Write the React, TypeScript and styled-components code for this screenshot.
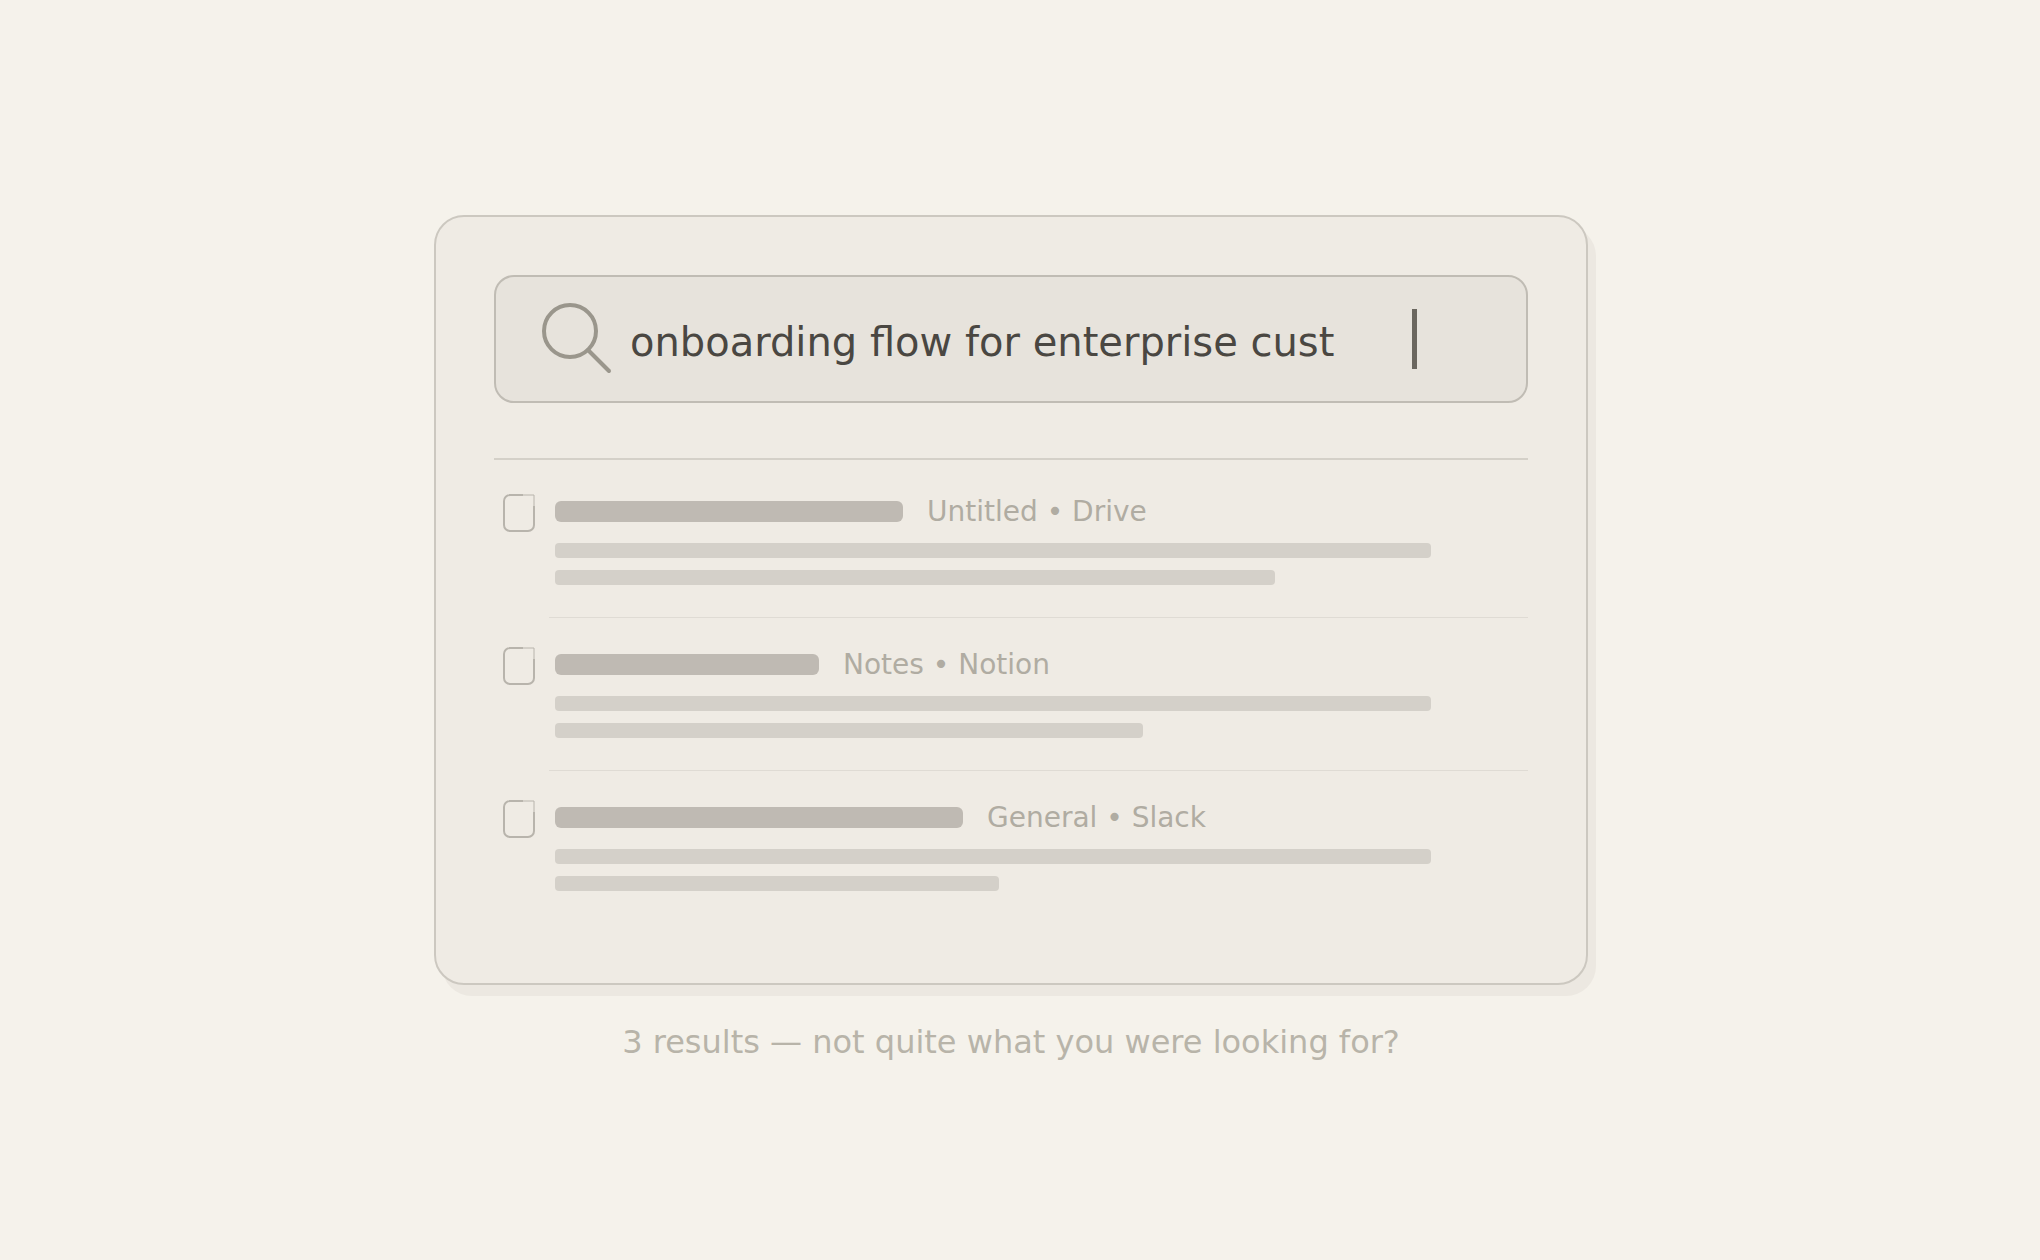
import styled, { createGlobalStyle } from "styled-components";

const GlobalStyle = createGlobalStyle`
  html, body {
    margin: 0;
    padding: 0;
    background: #f5f2eb;
  }
`;

const Page = styled.main`
  width: 2040px;
  height: 1260px;
  box-sizing: border-box;
  padding: 215px 0 0 434px;
  font-family: "DejaVu Sans", sans-serif;
`;

const Column = styled.div`
  width: 1154px;
  display: flex;
  flex-direction: column;
  align-items: center;
`;

const Card = styled.section`
  width: 100%;
  height: 770px;
  box-sizing: border-box;
  padding: 58px 58px 0;
  background: #efebe4;
  border: 2px solid #ccc8c0;
  border-radius: 30px;
  box-shadow: 8px 11px 0 #ece8e1;
`;

const SearchBar = styled.div`
  height: 128px;
  box-sizing: border-box;
  display: flex;
  align-items: center;
  padding-left: 46px;
  background: #e7e3dc;
  border: 2px solid #c0bcb4;
  border-radius: 20px;
`;

const SearchIcon = styled.svg`
  width: 72px;
  height: 72px;
  flex: none;
  margin-right: 16px;
  fill: none;
  stroke: #9a968c;
  stroke-width: 4;
  stroke-linecap: round;
`;

const Query = styled.span`
  width: 782px;
  flex: none;
  font-size: 40px;
  color: #4a4742;
  white-space: nowrap;
  position: relative;
  top: 3px;
`;

const Caret = styled.span`
  width: 5px;
  height: 60px;
  background: #6b675f;
`;

const Results = styled.div`
  margin-top: 55px;
  border-top: 2px solid #d4d0c8;
`;

const Row = styled.article`
  display: flex;
  gap: 20px;
  padding: 34px 0 0 9px;
  height: 153px;
  box-sizing: border-box;
`;

const DocIcon = styled.svg`
  width: 32px;
  height: 38px;
  flex: none;
  fill: none;
  stroke: #b8b4ac;
  stroke-width: 2;
`;

const Body = styled.div`
  flex: 1;
  min-width: 0;
  display: flex;
  flex-direction: column;
  position: relative;
`;

const TitleRow = styled.div`
  display: flex;
  align-items: center;
  gap: 24px;
  height: 21px;
  margin-top: 7px;
  margin-bottom: 21px;
`;

const TitleBar = styled.div<{ $width: number }>`
  width: ${(p) => p.$width}px;
  height: 21px;
  border-radius: 6px;
  background: #bfbab3;
`;

const Meta = styled.span`
  font-size: 28px;
  color: #b0aca2;
  white-space: nowrap;
`;

const Line = styled.div<{ $width: number }>`
  width: ${(p) => p.$width}px;
  height: 15px;
  border-radius: 4px;
  background: #d4d0c9;
  margin-bottom: 12px;
`;

const RowRule = styled.div`
  position: absolute;
  left: -6px;
  right: 0;
  top: 123px;
  height: 1px;
  background: #dfdbd4;
`;

const Footer = styled.p`
  margin: 38px 0 0;
  font-size: 32px;
  color: #b8b4a9;
`;

const rows = [
  { title: 348, meta: "Untitled • Drive", second: 720 },
  { title: 264, meta: "Notes • Notion", second: 588 },
  { title: 408, meta: "General • Slack", second: 444 },
];

export default function App() {
  return (
    <>
      <GlobalStyle />
      <Page>
        <Column>
          <Card>
            <SearchBar>
              <SearchIcon viewBox="0 0 72 72">
                <circle cx="28" cy="28" r="26" />
                <line x1="46" y1="47" x2="67" y2="68" />
              </SearchIcon>
              <Query>onboarding flow for enterprise cust</Query>
              <Caret />
            </SearchBar>
            <Results>
              {rows.map((row, i) => (
                <Row key={row.meta}>
                  <DocIcon viewBox="0 0 32 38">
                    <path d="M6 1H20M31 12V31a6 6 0 0 1-6 6H7a6 6 0 0 1-6-6V7a6 6 0 0 1 6-6" />
                    <path d="M20 1H31V12" strokeWidth="1" />
                  </DocIcon>
                  <Body>
                    <TitleRow>
                      <TitleBar $width={row.title} />
                      <Meta>{row.meta}</Meta>
                    </TitleRow>
                    <Line $width={876} />
                    <Line $width={row.second} />
                    {i < rows.length - 1 && <RowRule />}
                  </Body>
                </Row>
              ))}
            </Results>
          </Card>
          <Footer>3 results — not quite what you were looking for?</Footer>
        </Column>
      </Page>
    </>
  );
}
